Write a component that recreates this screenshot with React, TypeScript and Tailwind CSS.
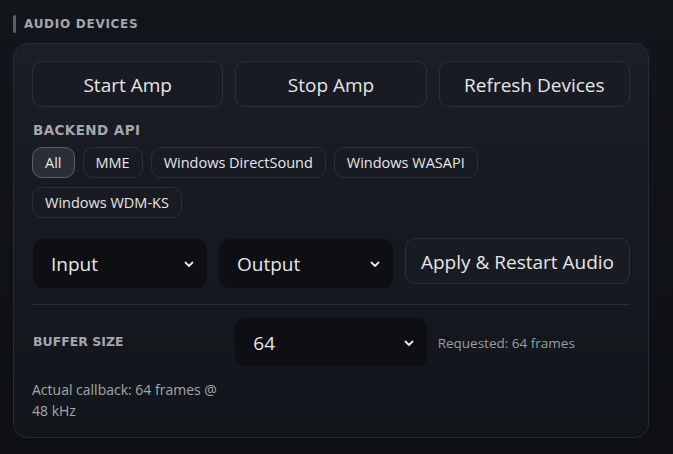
import React from "react";

const Chevron = () => (
  <svg width="12" height="12" viewBox="0 0 12 12" fill="none" className="shrink-0">
    <path d="M2.5 4.5 L6 8 L9.5 4.5" stroke="#e8e8e8" strokeWidth="1.8" strokeLinecap="round" strokeLinejoin="round" />
  </svg>
);

const Select = ({ label, className = "" }: { label: string; className?: string }) => (
  <div
    className={
      "flex items-center justify-between rounded-[10px] bg-[#0d0f13] pl-[18px] pr-[12px] text-[19px] text-[#e6e6e6] " +
      className
    }
  >
    <span>{label}</span>
    <Chevron />
  </div>
);

const Btn = ({ label, className = "" }: { label: string; className?: string }) => (
  <div
    className={
      "flex items-center justify-center rounded-[10px] border border-[#2b2f37] bg-[#181b22] pt-[2px] text-[19px] text-[#e6e6e6] " +
      className
    }
  >
    {label}
  </div>
);

const Chip = ({ label, active = false }: { label: string; active?: boolean }) => (
  <div
    className={
      "flex h-[31px] items-center rounded-[10px] border px-[12px] text-[14.5px] " +
      (active
        ? "border-[#5a5e66] bg-[#2a2e35] text-[#e6e6e6]"
        : "border-[#2b2f37] bg-[#181b22] text-[#e6e6e6]")
    }
  >
    {label}
  </div>
);

export default function App() {
  return (
    <div
      className="h-[454px] w-[673px] overflow-hidden bg-gradient-to-b from-[#121519] to-[#0e1013] px-[13px] pt-[15px]"
      style={{ fontFamily: '"Open Sans", "Noto Sans", sans-serif' }}
    >
      <div className="flex items-center gap-[8px]">
        <div className="h-[18px] w-[3px] rounded-full bg-[#5b5f66]" />
        <div
          className="text-[12px] font-bold tracking-[0.06em] text-[#a3a7ad]"
          style={{ fontFamily: '"DejaVu Sans", sans-serif' }}
        >
          AUDIO DEVICES
        </div>
      </div>

      <div className="mt-[10px] h-[395px] w-[636px] rounded-[14px] border border-[#272b33] bg-gradient-to-b from-[#1a1e25] to-[#12151a] px-[18px] pt-[17px]">
        <div className="grid grid-cols-3 gap-[12px]">
          <Btn label="Start Amp" className="h-[46px]" />
          <Btn label="Stop Amp" className="h-[46px]" />
          <Btn label="Refresh Devices" className="h-[46px]" />
        </div>

        <div
          className="mt-[13px] pl-[1px] text-[13.5px] font-bold tracking-[0.03em] text-[#a3a7ad]"
          style={{ fontFamily: '"DejaVu Sans", sans-serif' }}
        >
          BACKEND API
        </div>

        <div className="mt-[7px] flex flex-wrap gap-x-[8px] gap-y-[9px]">
          <Chip label="All" active />
          <Chip label="MME" />
          <Chip label="Windows DirectSound" />
          <Chip label="Windows WASAPI" />
          <Chip label="Windows WDM-KS" />
        </div>

        <div className="mt-[21px] flex items-start gap-[12px] pl-[1px]">
          <Select label="Input" className="h-[49px] w-[174px]" />
          <Select label="Output" className="h-[49px] w-[174px]" />
          <Btn label="Apply & Restart Audio" className="-mt-[1px] h-[46px] flex-1" />
        </div>

        <div className="mt-[16px] h-px bg-[#2a2e36]" />

        <div className="mt-[13px] grid grid-cols-3 items-center gap-x-[12px]">
          <div
            className="pl-[1px] text-[12.5px] font-bold text-[#a3a7ad]"
            style={{ fontFamily: '"DejaVu Sans", sans-serif' }}
          >
            BUFFER SIZE
          </div>
          <Select label="64" className="h-[49px]" />
          <div className="-ml-[1px] text-[13.5px] text-[#9a9ea5]">Requested: 64 frames</div>
          <div className="col-start-1 mt-[12px] text-[14px] leading-[21px] text-[#a3a7ad]">
            Actual callback: 64 frames @ 48 kHz
          </div>
        </div>
      </div>
    </div>
  );
}
